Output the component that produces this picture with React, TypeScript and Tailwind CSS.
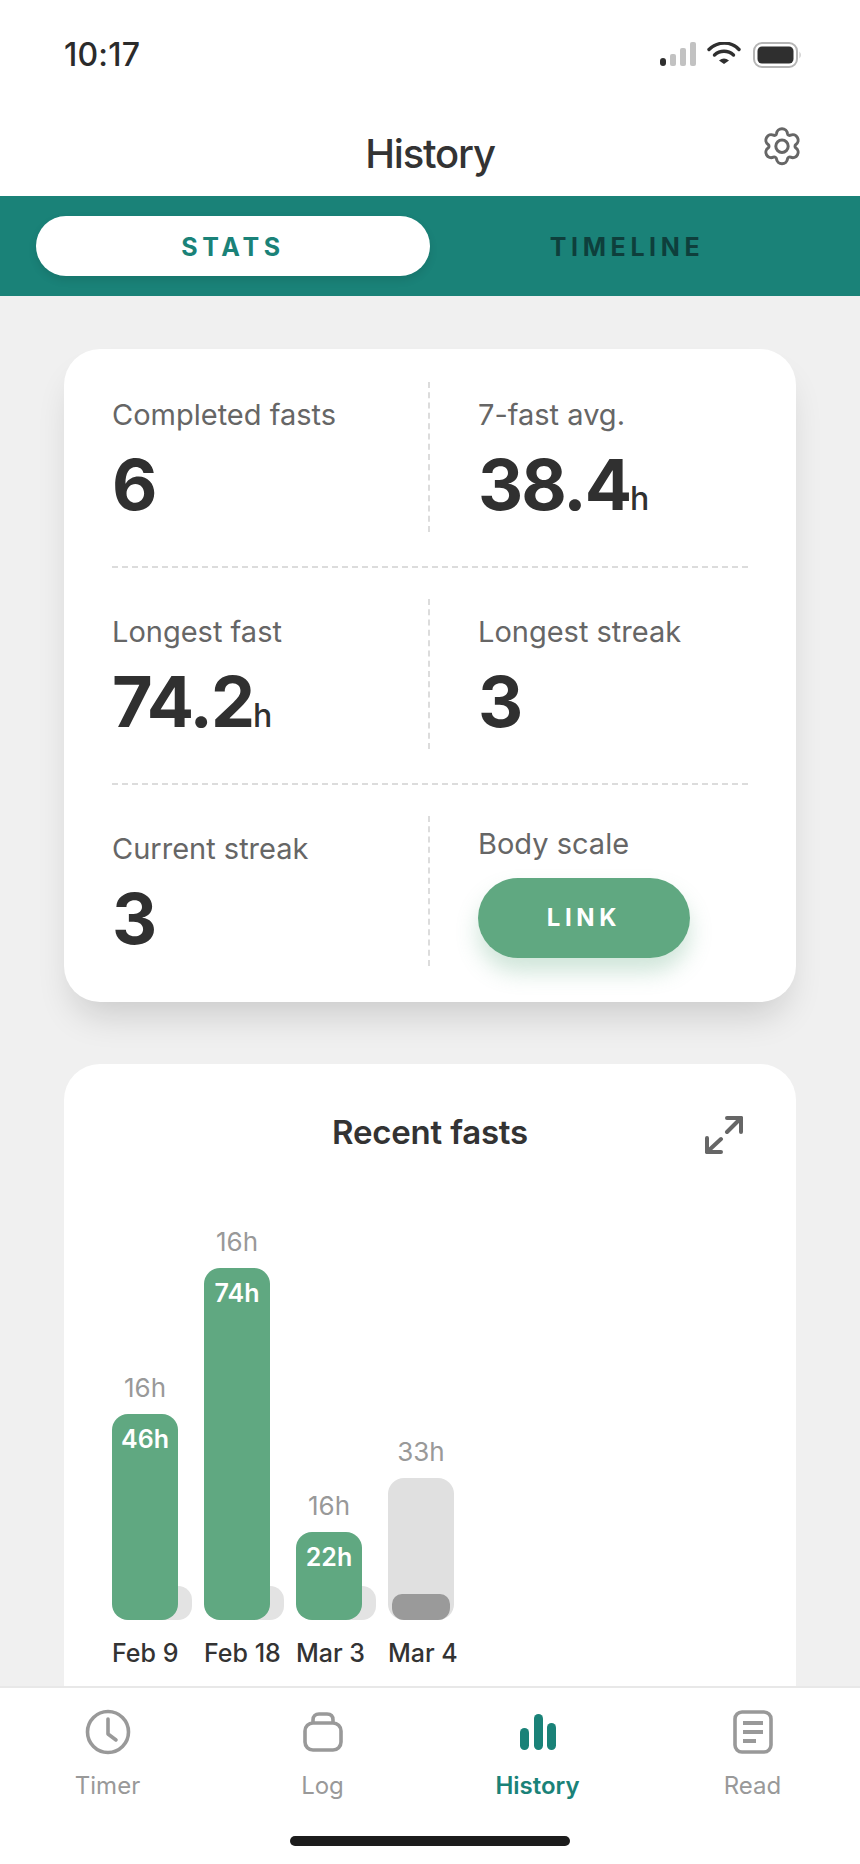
import type { ReactNode } from "react";

const font = { fontFamily: "Inter, 'Liberation Sans', sans-serif" };

function StatusBar() {
  return (
    <div className="flex h-[96px] items-start justify-between pl-[64px] pr-[58px] pt-[37px]">
      <span className="text-[32px] font-medium leading-[36px] tracking-[0.2px] text-[#2b2b2b]">10:17</span>
      <div className="mt-[5px] flex items-start">
        <svg width="146" height="30" viewBox="0 0 146 30">
          <rect x="4" y="16" width="6" height="8" rx="3" fill="#2f2f2f" />
          <rect x="14" y="12" width="6" height="12" rx="2" fill="#c2c2c2" />
          <rect x="24" y="6" width="6" height="18" rx="2" fill="#c2c2c2" />
          <rect x="34" y="0" width="6" height="24" rx="2" fill="#c2c2c2" />
          <path d="M53 7.5C62 -1 75 -1 83 7.5" fill="none" stroke="#2f2f2f" strokeWidth="3.4" strokeLinecap="round" />
          <path d="M58.5 13C64 8 72 8 77.5 13" fill="none" stroke="#2f2f2f" strokeWidth="3.4" strokeLinecap="round" />
          <path d="M63 18.5Q68 14.5 73 18.5L68 22Z" fill="#2f2f2f" />
          <rect x="98" y="1" width="43" height="24" rx="8" fill="none" stroke="#b5b5b5" strokeWidth="2" />
          <rect x="101.5" y="4.5" width="36" height="17" rx="4.5" fill="#2f2f2f" />
          <path d="M143.5 9.5Q146 13 143.5 16.5Z" fill="#c2c2c2" />
        </svg>
      </div>
    </div>
  );
}

function GearIcon() {
  return (
    <svg width="38" height="40" viewBox="0 0 38 40" fill="none" stroke="#666" strokeWidth="3" strokeLinejoin="round">
      <path d="M13.5 6.5C13.8 3.6 16.2 1.8 19 1.8C21.8 1.8 24.2 3.6 24.5 6.5C24.7 8 26.3 8.8 27.6 8.2C30.2 7 33 8 34.4 10.4C35.8 12.8 35.2 15.8 32.9 17.4C31.7 18.3 31.7 20.1 32.9 21C35.2 22.6 35.8 25.6 34.4 28C33 30.4 30.2 31.4 27.6 30.2C26.3 29.6 24.7 30.4 24.5 31.9C24.2 34.8 21.8 36.8 19 36.8C16.2 36.8 13.8 34.8 13.5 31.9C13.3 30.4 11.7 29.6 10.4 30.2C7.8 31.4 5 30.4 3.6 28C2.2 25.6 2.8 22.6 5.1 21C6.3 20.1 6.3 18.3 5.1 17.4C2.8 15.8 2.2 12.8 3.6 10.4C5 8 7.8 7 10.4 8.2C11.7 8.8 13.3 8 13.5 6.5Z" />
      <circle cx="19" cy="19.2" r="6.2" />
    </svg>
  );
}

function Stat({ label, value, unit }: { label: string; value: string; unit?: string }) {
  return (
    <div className="flex flex-col pt-[6px]">
      <span className="text-[29px] leading-[34px] text-[#666]">{label}</span>
      <div className="mt-[15px] flex h-[76px] items-baseline leading-[76px] text-[#303030]">
        <span className="text-[70px] font-bold tracking-[-2px]">{value}</span>
        {unit && <span className="text-[32px] font-medium">{unit}</span>}
      </div>
    </div>
  );
}

function StatRow({ left, right }: { left: ReactNode; right: ReactNode }) {
  return (
    <div className="flex h-[150px]">
      <div className="flex w-[318px] flex-col justify-center border-r-2 border-dashed border-[#dcdcdc]">{left}</div>
      <div className="flex flex-1 flex-col justify-center pl-[48px]">{right}</div>
    </div>
  );
}

const bars = [
  { label: "Feb 9", top: "16h", value: "46h", height: "h-[206px]" },
  { label: "Feb 18", top: "16h", value: "74h", height: "h-[352px]" },
  { label: "Mar 3", top: "16h", value: "22h", height: "h-[88px]" },
];

function Bar({ label, top, value, height }: { label: string; top: string; value: string; height: string }) {
  return (
    <div className="flex w-[66px] flex-col">
      <span className="mb-[11px] text-center text-[26px] leading-[30px] text-[#999]">{top}</span>
      <div className="relative">
        <div className="absolute bottom-0 left-[14px] h-[34px] w-[66px] rounded-[14px] rounded-bl-none bg-[#e3e3e3]" />
        <div className={`relative rounded-[16px] bg-[#60a881] pt-[10px] text-center text-[25px] font-semibold leading-[30px] text-white ${height}`}>
          {value}
        </div>
      </div>
      <span className="mt-[18px] whitespace-nowrap text-[25px] font-medium leading-[30px] text-[#333]">{label}</span>
    </div>
  );
}

function NavItem({ label, active, children }: { label: string; active?: boolean; children: ReactNode }) {
  return (
    <div className="flex flex-1 flex-col items-center">
      <div className="flex h-[46px] items-center justify-center">{children}</div>
      <span className={active ? "mt-[16px] text-[24px] font-semibold leading-[30px] text-[#1a8278]" : "mt-[16px] text-[24px] leading-[30px] text-[#999]"}>
        {label}
      </span>
    </div>
  );
}

export default function App() {
  return (
    <div className="flex h-[1864px] w-[860px] flex-col overflow-hidden bg-[#f0f0f0]" style={font}>
      <div className="bg-white">
        <StatusBar />
        <header className="relative flex h-[100px] items-start justify-center">
          <h1 className="pt-[35px] text-[40px] font-medium leading-[46px] tracking-[-1.2px] text-[#333]">History</h1>
          <div className="absolute right-[59px] top-[31px]">
            <GearIcon />
          </div>
        </header>
      </div>

      <div className="flex h-[100px] shrink-0 items-center bg-[#1a8278] px-[36px]">
        <div className="flex h-[60px] w-[394px] items-center justify-center rounded-[30px] bg-white pt-[3px] text-[25px] font-bold tracking-[4.6px] text-[#1a8278] shadow-[0_4px_8px_rgba(0,0,0,0.1)]">
          STATS
        </div>
        <div className="flex-1 pt-[3px] text-center text-[25px] font-bold tracking-[4.6px] text-[#0e3f3c]">TIMELINE</div>
      </div>

      <main className="min-h-0 flex-1 overflow-hidden px-[64px] pt-[53px]">
        <section className="rounded-[36px] bg-white px-[48px] pb-[36px] pt-[33px] shadow-[0_22px_36px_-10px_rgba(0,0,0,0.16)]">
          <StatRow left={<Stat label="Completed fasts" value="6" />} right={<Stat label="7-fast avg." value="38.4" unit="h" />} />
          <div className="mb-[31px] mt-[34px] border-t-2 border-dashed border-[#dcdcdc]" />
          <StatRow left={<Stat label="Longest fast" value="74.2" unit="h" />} right={<Stat label="Longest streak" value="3" />} />
          <div className="mb-[31px] mt-[34px] border-t-2 border-dashed border-[#dcdcdc]" />
          <StatRow
            left={<Stat label="Current streak" value="3" />}
            right={
              <div className="flex flex-col pt-[3px]">
                <span className="text-[29px] leading-[34px] text-[#666]">Body scale</span>
                <div className="mt-[17px] flex h-[80px] w-[212px] items-center justify-center rounded-[40px] bg-[#60a881] text-[24px] font-bold tracking-[4.6px] text-white shadow-[0_14px_22px_rgba(96,168,129,0.3)]">
                  LINK
                </div>
              </div>
            }
          />
        </section>

        <section className="mt-[62px] h-[700px] rounded-[36px] bg-white px-[48px] pt-[49px]">
          <div className="relative text-center text-[33px] font-semibold leading-[38px] tracking-[-0.2px] text-[#333]">
            Recent fasts
            <svg className="absolute right-[5px] top-[2px]" width="38" height="40" viewBox="0 0 38 40" fill="none" stroke="#666" strokeWidth="4" strokeLinecap="round" strokeLinejoin="round">
              <path d="M22 3H36V17" />
              <path d="M36 3L22 17" />
              <path d="M16 24L2 37" />
              <path d="M2 23V37H16" />
            </svg>
          </div>
          <div className="mt-[77px] flex h-[440px] items-end gap-[26px]">
            {bars.map((b) => (
              <Bar key={b.label} {...b} />
            ))}
            <div className="flex w-[66px] flex-col">
              <span className="mb-[11px] text-center text-[26px] leading-[30px] text-[#999]">33h</span>
              <div className="flex h-[142px] items-end rounded-[16px] bg-[#e0e0e0] px-[4px]">
                <div className="h-[26px] w-full rounded-[10px] rounded-b-[12px] bg-[#9a9a9a]" />
              </div>
              <span className="mt-[18px] whitespace-nowrap text-[25px] font-medium leading-[30px] text-[#333]">Mar 4</span>
            </div>
          </div>
        </section>
      </main>

      <nav className="relative h-[178px] shrink-0 border-t-2 border-[#e8e8e8] bg-white pt-[21px]">
        <div className="flex">
          <NavItem label="Timer">
            <svg width="46" height="46" viewBox="0 0 46 46" fill="none" stroke="#999" strokeWidth="3.6" strokeLinecap="round" strokeLinejoin="round">
              <circle cx="23" cy="23" r="20.5" />
              <path d="M23 10V25L31 31" />
            </svg>
          </NavItem>
          <NavItem label="Log">
            <svg width="40" height="40" viewBox="0 0 40 40" fill="none" stroke="#999" strokeWidth="3.6" strokeLinejoin="round">
              <rect x="2" y="11" width="36" height="27" rx="8" />
              <path d="M10 11V8C10 4 12.5 2 16 2H24C27.5 2 30 4 30 8V11" />
            </svg>
          </NavItem>
          <NavItem label="History" active>
            <svg width="36" height="36" viewBox="0 0 36 36" fill="#1a8278">
              <rect x="0" y="14" width="9" height="22" rx="4.5" />
              <rect x="14" y="0" width="9" height="36" rx="4.5" />
              <rect x="27" y="9" width="9" height="27" rx="4.5" />
            </svg>
          </NavItem>
          <NavItem label="Read">
            <svg width="40" height="44" viewBox="0 0 40 44" fill="none" stroke="#999" strokeWidth="3.6">
              <rect x="2" y="2" width="36" height="40" rx="7" />
              <path d="M10 13H30" strokeWidth="4" />
              <path d="M10 22H30" strokeWidth="4" />
              <path d="M10 31H23" strokeWidth="4" />
            </svg>
          </NavItem>
        </div>
        <div className="absolute bottom-[18px] left-[290px] h-[10px] w-[280px] rounded-[5px] bg-[#1c1c1c]" />
      </nav>
    </div>
  );
}
